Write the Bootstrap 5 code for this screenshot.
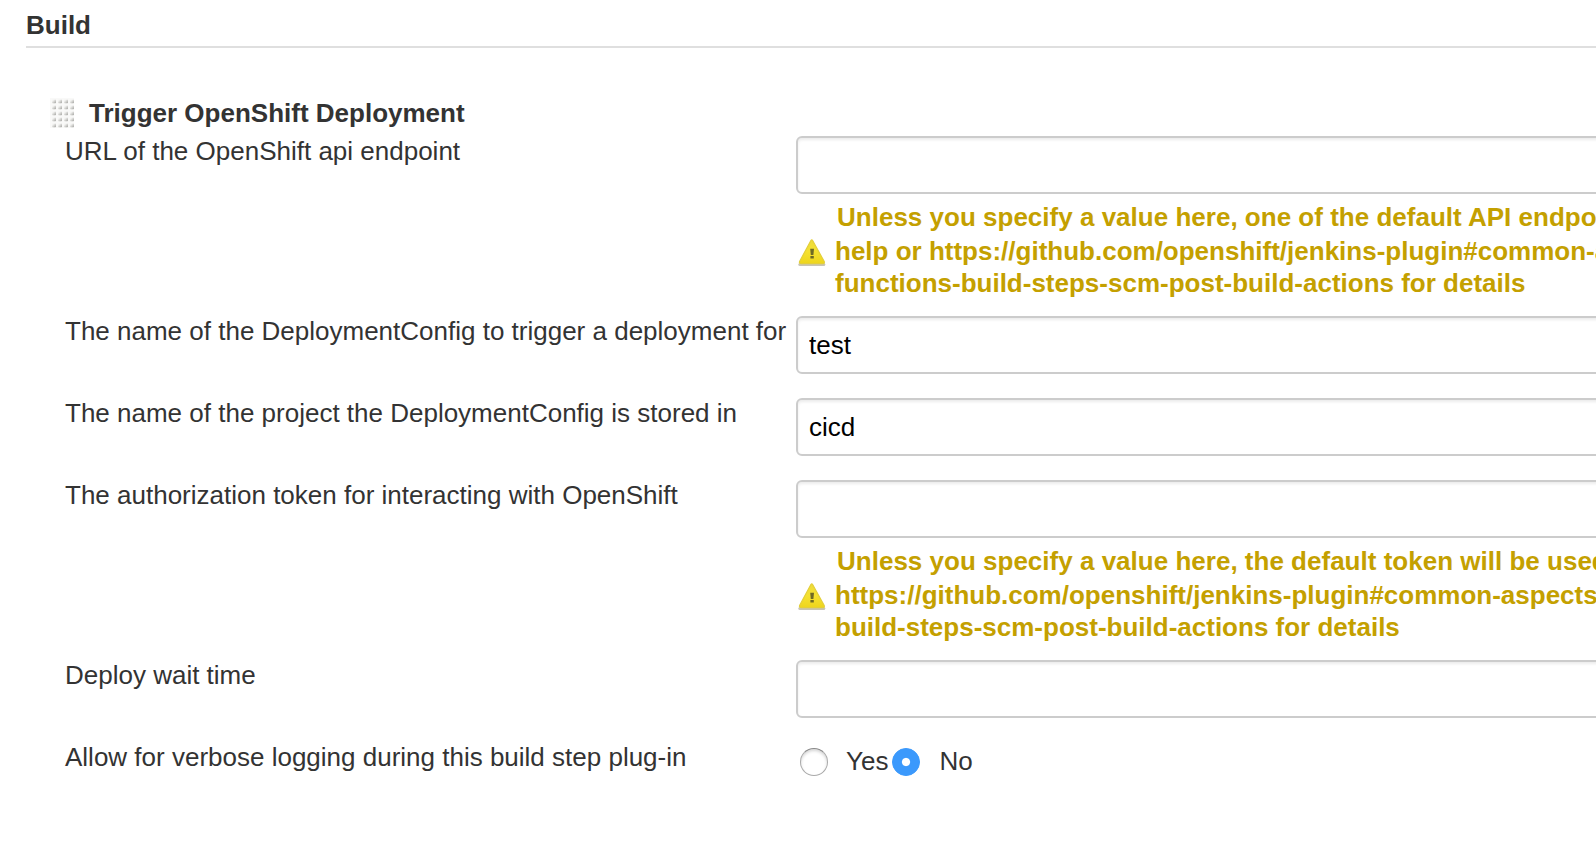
<!DOCTYPE html>
<html lang="en">
<head>
<meta charset="utf-8">
<meta name="viewport" content="width=device-width, initial-scale=1">
<title>Build configuration</title>
<link href="https://cdn.jsdelivr.net/npm/bootstrap@5.3.0/dist/css/bootstrap.min.css" rel="stylesheet">
<style>
body { font: 26px/30px "Liberation Sans", Arial, sans-serif; color: #333; background: #fff; height: 848px; }
.section-title { margin-left: 26px; height: 48px; padding-top: 10px; border-bottom: 2px solid #dfdfdf; font-size: 26px; line-height: 30px; }
.step-head { margin: 50px 0 0 50px; height: 38px; }
.step-head h2 { font-size: 26px; line-height: 30px; margin-left: 15px; }
.step-head svg { width: 24px; height: 30px; }
.field-row { padding-left: 65px; height: 82px; }
.field-row.with-warning { height: 180px; }
.field-label { width: 731px; }
.field-area { width: 850px; }
.form-control.field-input { height: 58px; border: 2px solid #ccc; border-radius: 6px; padding: 0 11px; font-size: 26px; line-height: 30px; color: #000; box-shadow: inset 0 2px 3px rgba(0,0,0,.08); }
.warn { color: #c4a000; font-weight: 700; line-height: 32px; margin-top: 7px; }
.warn-icon { width: 30px; height: 30px; margin: 37px 8px 0 1px; }
.warn-first { padding-left: 2px; height: 34px; letter-spacing: .01px; }
.radio-line { padding: 6px 0 0 4px; }
.radio-line label { margin-top: -2px; }
.form-check-input.field-radio { width: 28px; height: 28px; margin: 0 18px 0 0; border: 1px solid #aaa; border-top-color: #888; background-color: #fff; box-shadow: inset 0 2px 3px rgba(0,0,0,.16); }
.form-check-input.field-radio:checked { margin-right: 19px; border-color: #3b99fc; background-color: #3b99fc; background-image: radial-gradient(circle, #fff 0 3.6px, rgba(255,255,255,0) 4.6px); background-size: 100% 100%; box-shadow: none; }
</style>
</head>
<body class="overflow-hidden">
<main>
  <h1 class="section-title fw-bold mb-0">Build</h1>
  <div class="step-head d-flex align-items-start">
    <svg viewBox="0 0 24 30" aria-hidden="true">
      <defs>
        <linearGradient id="gd" x1="0" y1="0" x2="1" y2="1"><stop offset=".25" stop-color="#f4f4f2"/><stop offset="1" stop-color="#a2a29e"/></linearGradient>
        <pattern id="grip" width="6" height="6" patternUnits="userSpaceOnUse"><rect width="6" height="6" fill="#f9f9f8"/><rect x="2" y="1.5" width="4" height="3.7" rx=".8" fill="url(#gd)"/></pattern>
      </defs>
      <rect width="24" height="30" fill="url(#grip)"/>
    </svg>
    <h2 class="fw-bold mb-0">Trigger OpenShift Deployment</h2>
  </div>

  <div class="field-row with-warning d-flex">
    <label class="field-label flex-shrink-0 text-nowrap" for="url">URL of the OpenShift api endpoint</label>
    <div class="field-area flex-shrink-0">
      <input class="form-control field-input" id="url" type="text">
      <div class="warn d-flex text-nowrap">
        <svg class="warn-icon flex-shrink-0" viewBox="0 0 30 30" aria-hidden="true">
          <defs><linearGradient id="wy" x1="0" y1="0" x2="0" y2="1"><stop offset="0" stop-color="#eddb3c"/><stop offset=".5" stop-color="#f5e130"/><stop offset="1" stop-color="#eed51c"/></linearGradient></defs>
          <path d="M2.8 26.6H26.8" stroke="#aaa58a" stroke-opacity=".65" stroke-width="3" stroke-linecap="round"/>
          <path d="M15.6 2.5 27.2 23.5Q27.8 25.6 26.2 25.6H3.8Q2 25.6 2.6 23.5L13.9 2.5Q14.8 1.2 15.6 2.5Z" fill="url(#wy)" stroke="#e3cf3a" stroke-width="1.2"/>
          <path d="M13.2 10.8h3.8l-.6 6.2h-2.6zM13.4 18h3.4v2.5h-3.4z" fill="#6f6a25"/>
        </svg>
        <div>
          <div class="warn-first">Unless you specify a value here, one of the default API endpoints</div>
          <div>help or https://github.com/openshift/jenkins-plugin#common-aspects</div>
          <div>functions-build-steps-scm-post-build-actions for details</div>
        </div>
      </div>
    </div>
  </div>

  <div class="field-row d-flex">
    <label class="field-label flex-shrink-0 text-nowrap" for="dc">The name of the DeploymentConfig to trigger a deployment for</label>
    <div class="field-area flex-shrink-0"><input class="form-control field-input" id="dc" type="text" value="test"></div>
  </div>
  <div class="field-row d-flex">
    <label class="field-label flex-shrink-0 text-nowrap" for="project">The name of the project the DeploymentConfig is stored in</label>
    <div class="field-area flex-shrink-0"><input class="form-control field-input" id="project" type="text" value="cicd"></div>
  </div>

  <div class="field-row with-warning d-flex">
    <label class="field-label flex-shrink-0 text-nowrap" for="token">The authorization token for interacting with OpenShift</label>
    <div class="field-area flex-shrink-0">
      <input class="form-control field-input" id="token" type="text">
      <div class="warn d-flex text-nowrap">
        <svg class="warn-icon flex-shrink-0" viewBox="0 0 30 30" aria-hidden="true">
          <path d="M2.8 26.6H26.8" stroke="#aaa58a" stroke-opacity=".65" stroke-width="3" stroke-linecap="round"/>
          <path d="M15.6 2.5 27.2 23.5Q27.8 25.6 26.2 25.6H3.8Q2 25.6 2.6 23.5L13.9 2.5Q14.8 1.2 15.6 2.5Z" fill="url(#wy)" stroke="#e3cf3a" stroke-width="1.2"/>
          <path d="M13.2 10.8h3.8l-.6 6.2h-2.6zM13.4 18h3.4v2.5h-3.4z" fill="#6f6a25"/>
        </svg>
        <div>
          <div class="warn-first">Unless you specify a value here, the default token will be used</div>
          <div>https://github.com/openshift/jenkins-plugin#common-aspects</div>
          <div>build-steps-scm-post-build-actions for details</div>
        </div>
      </div>
    </div>
  </div>

  <div class="field-row d-flex">
    <label class="field-label flex-shrink-0 text-nowrap" for="wait">Deploy wait time</label>
    <div class="field-area flex-shrink-0"><input class="form-control field-input" id="wait" type="text"></div>
  </div>
  <div class="field-row d-flex">
    <div class="field-label flex-shrink-0 text-nowrap">Allow for verbose logging during this build step plug-in</div>
    <div class="radio-line d-flex align-items-start">
      <input class="form-check-input field-radio flex-shrink-0" type="radio" name="verbose" id="yes">
      <label for="yes">Yes</label>
      <input class="form-check-input field-radio flex-shrink-0 ms-1" type="radio" name="verbose" id="no" checked>
      <label for="no">No</label>
    </div>
  </div>
</main>
<script src="https://cdn.jsdelivr.net/npm/bootstrap@5.3.0/dist/js/bootstrap.bundle.min.js"></script>
</body>
</html>
